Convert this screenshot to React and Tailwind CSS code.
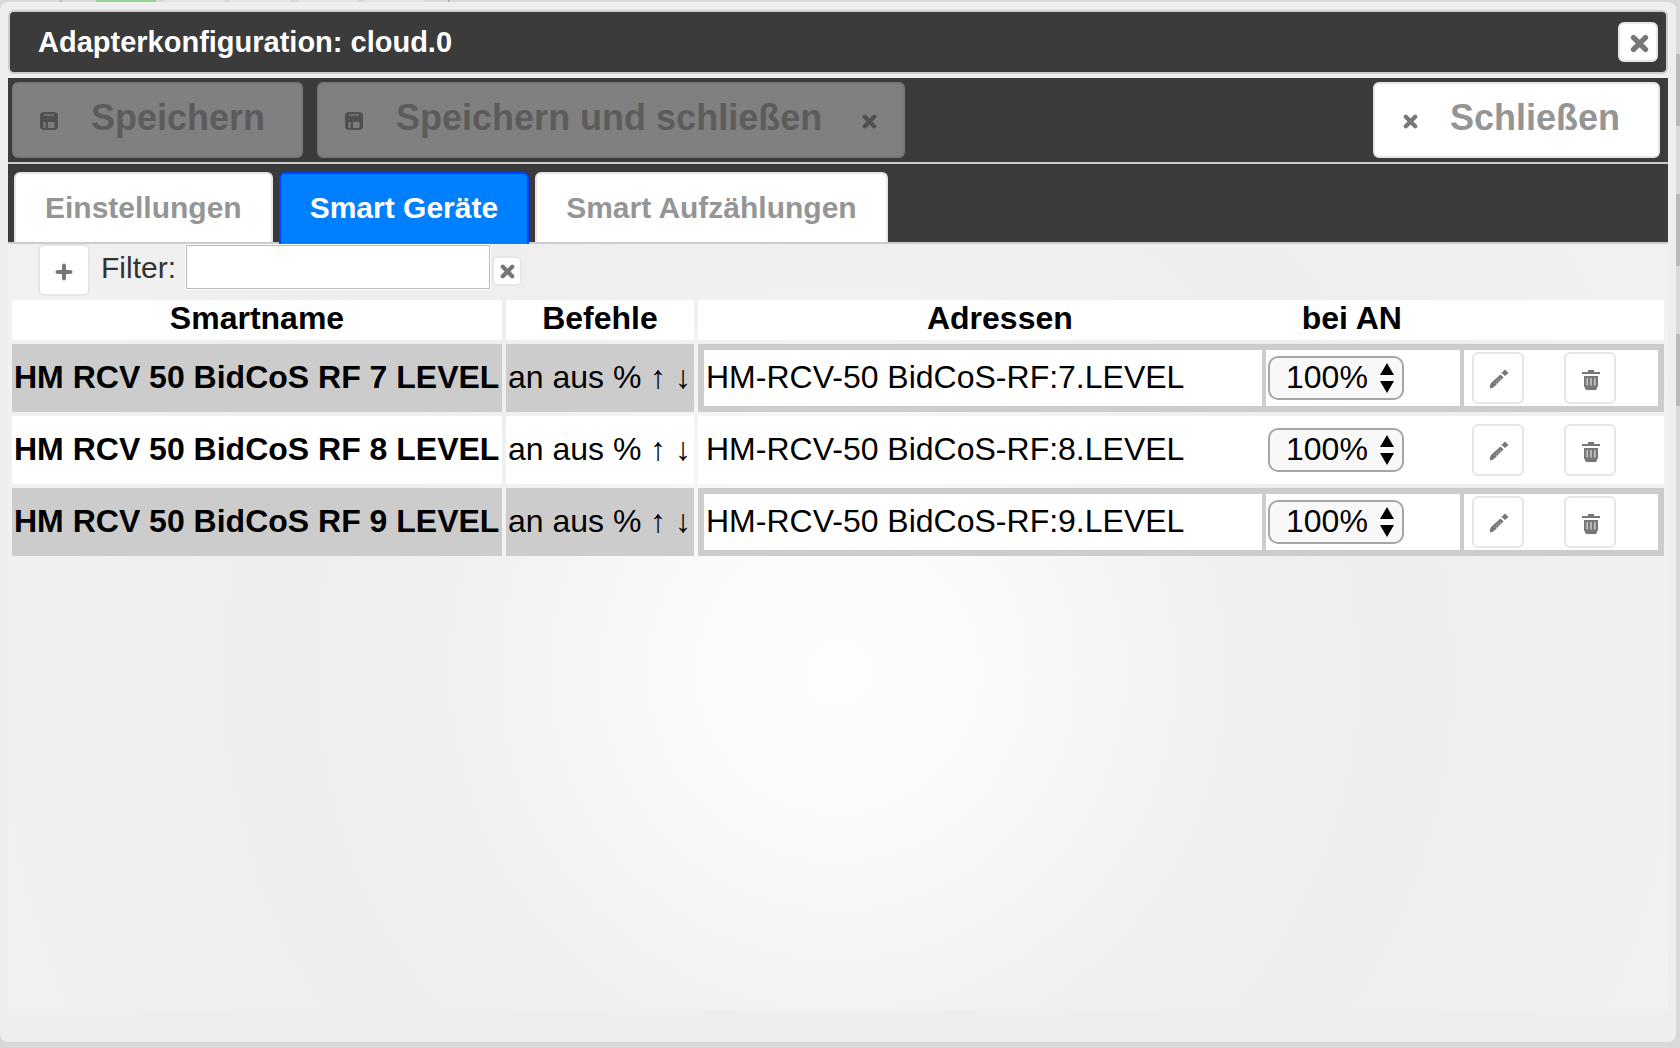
import { useState } from 'react'

const devices = [
  { name: 'HM RCV 50 BidCoS RF 7 LEVEL', address: 'HM-RCV-50 BidCoS-RF:7.LEVEL' },
  { name: 'HM RCV 50 BidCoS RF 8 LEVEL', address: 'HM-RCV-50 BidCoS-RF:8.LEVEL' },
  { name: 'HM RCV 50 BidCoS RF 9 LEVEL', address: 'HM-RCV-50 BidCoS-RF:9.LEVEL' },
]

const tabs = ['Einstellungen', 'Smart Geräte', 'Smart Aufzählungen']

export default function App() {
  const [tab, setTab] = useState(1)
  const [filter, setFilter] = useState('')

  return (
    <div className="relative flex min-h-screen flex-col bg-[#d9d9d9] pt-0.5 pr-1 pb-1.5 font-['Liberation_Sans',Arial,sans-serif]">
      <PageBehind />
      <div className="relative flex flex-1 flex-col rounded-lg bg-[#eee] px-2 pt-2 pb-8">
        <header className="flex h-16 items-center justify-between rounded-md border-2 border-[#ccc] bg-[#3b3b3b] pr-2 pl-7">
          <h1 className="text-[29px] leading-9 font-bold text-white">Adapterkonfiguration: cloud.0</h1>
          <IconButton label="Dialog schließen" className="size-10 pt-0.5 pl-0.5">
            <CloseIcon className="size-[19px]" />
          </IconButton>
        </header>

        <div className="mt-1 flex h-[86px] items-start border-b-2 border-[#ccc] bg-[#3b3b3b] px-1 pt-1">
          <button type="button" disabled className="flex h-[76px] items-center rounded-md border-2 border-[#777] bg-[#808080] pt-0.5 pr-9 pl-[25px] text-4xl font-bold text-[#5c5c5c]">
            <SaveIcon />
            <span className="pb-1.5 pl-8">Speichern</span>
          </button>
          <button type="button" disabled className="ml-3.5 flex h-[76px] items-center rounded-md border-2 border-[#777] bg-[#808080] pt-0.5 pr-[26px] pl-[25px] text-4xl font-bold text-[#5c5c5c]">
            <SaveIcon />
            <span className="pr-10 pb-1.5 pl-8">Speichern und schließen</span>
            <CloseIcon className="size-[15px] text-[#505050]" />
          </button>
          <button type="button" className="mr-1 ml-auto flex h-[76px] items-center rounded-md border-2 border-[#e6e6e6] bg-white pt-0.5 pr-[38px] pl-7 text-4xl font-bold text-[#959595]">
            <CloseIcon className="size-[15px] text-[#777]" />
            <span className="pb-1.5 pl-8">Schließen</span>
          </button>
        </div>

        <div role="tablist" className="flex h-20 items-end gap-1.5 border-b-2 border-[#ccc] bg-[#3b3b3b] pl-1.5">
          {tabs.map((t, i) => (
            <button
              key={t}
              type="button"
              role="tab"
              aria-selected={i === tab}
              onClick={() => setTab(i)}
              className={`rounded-t-md border-2 border-b-0 px-[29px] text-[30px] leading-9 font-bold ${
                i === tab
                  ? '-mb-0.5 h-[72px] border-[#0040ff] bg-[#007fff] pb-0.5 text-white'
                  : 'h-[70px] border-[#e6e6e6] bg-white text-[#959595]'
              }`}
            >
              {t}
            </button>
          ))}
        </div>

        <main className="flex-1 bg-[radial-gradient(circle_at_50%_428px,#fdfdfd_0px,#fbfbfb_130px,#f6f6f6_250px,#f0f0f0_400px,#eee_560px,#f1f1f1_900px)]">
          <div className="flex h-[52px] items-start pl-[30px]">
            <IconButton label="Gerät hinzufügen" className="size-[52px] pt-1">
              <PlusIcon />
            </IconButton>
            <label htmlFor="filter" className="mt-1.5 mr-2.5 ml-[11px] text-[30px] leading-9 text-[#333]">Filter:</label>
            <input
              id="filter"
              value={filter}
              onChange={(e) => setFilter(e.target.value)}
              className="mt-px h-11 w-[304px] border border-[#bbb] bg-white px-2 text-[30px] outline-1 outline-white"
            />
            <IconButton label="Filter löschen" className="mt-3 ml-0.5 size-[30px]" onClick={() => setFilter('')}>
              <CloseIcon className="size-[15px]" />
            </IconButton>
          </div>

          <table className="w-full border-separate border-spacing-1 text-[32px] leading-9 text-black">
            <thead>
              <tr className="h-10 bg-white">
                <th className="w-[490px] p-0 pb-1">Smartname</th>
                <th className="w-[188px] p-0 pb-1">Befehle</th>
                <th className="p-0 pb-1">
                  <div className="flex">
                    <span className="w-5/8">Adressen</span>
                    <span>bei AN</span>
                  </div>
                </th>
              </tr>
            </thead>
            <tbody>
              {devices
                .filter((d) => d.name.toLowerCase().includes(filter.toLowerCase()))
                .map((d) => (
                  <DeviceRow key={d.name} device={d} />
                ))}
            </tbody>
          </table>
        </main>
      </div>
    </div>
  )
}

function DeviceRow({ device }) {
  return (
    <tr className="h-[68px] bg-white odd:bg-[#ccc]">
      <td className="p-0.5 pb-1 font-bold whitespace-nowrap">{device.name}</td>
      <td className="p-0.5 pb-1 whitespace-nowrap">an aus % ↑ ↓</td>
      <td className="p-0.5">
        <table className="w-full border-separate border-spacing-1">
          <tbody>
            <tr className="h-14 bg-white">
              <td className="p-0.5 pb-1">{device.address}</td>
              <td className="w-[194px] p-0.5">
                <LevelSelect name={device.name} />
              </td>
              <td className="w-[194px] p-0">
                <div className="flex gap-10 pl-2">
                  <IconButton label={`${device.name} bearbeiten`} className="size-[52px] pt-0.5 pl-0.5">
                    <PencilIcon />
                  </IconButton>
                  <IconButton label={`${device.name} löschen`} className="size-[52px] pt-1 pl-0.5">
                    <TrashIcon />
                  </IconButton>
                </div>
              </td>
            </tr>
          </tbody>
        </table>
      </td>
    </tr>
  )
}

function LevelSelect({ name }) {
  return (
    <div className="relative w-[136px]">
      <select
        aria-label={`${name} bei AN`}
        defaultValue="100%"
        className="block h-11 w-full appearance-none rounded-[10px] border-2 border-[#a6a6a6] bg-[#f8f8f8] pb-0.5 pl-4 leading-9"
      >
        <option>100%</option>
        <option>75%</option>
        <option>50%</option>
        <option>25%</option>
      </select>
      <svg viewBox="0 0 14 30" className="pointer-events-none absolute top-[7px] right-2.5 h-[30px] w-3.5" fill="#000">
        <path d="M7 0 14 12H0zM7 30 0 18h14z" />
      </svg>
    </div>
  )
}

function IconButton({ label, className, onClick, children }) {
  return (
    <button
      type="button"
      aria-label={label}
      onClick={onClick}
      className={`flex shrink-0 items-center justify-center rounded-md border-2 border-[#e6e6e6] bg-white text-[#777] ${className}`}
    >
      {children}
    </button>
  )
}

// slivers of the page that stick out around the dialog
function PageBehind() {
  return (
    <div aria-hidden="true">
      <div className="absolute inset-x-0 top-0 flex h-2">
        <span className="ml-[60px] w-0.5 bg-[#bbb]" />
        <span className="ml-[34px] w-[60px] bg-[#93d693]" />
        <span className="ml-2 w-[60px] bg-[#e4e4e4]" />
        <span className="ml-1.5 w-[60px] bg-[#e4e4e4]" />
        <span className="ml-2 w-[60px] bg-[#e4e4e4]" />
        <span className="ml-1.5 w-[60px] bg-[#e4e4e4]" />
        <span className="ml-6 w-0.5 bg-[#bbb]" />
      </div>
      <div className="absolute top-[54px] right-0 flex w-2 flex-col gap-[68px]">
        <span className="h-[72px] bg-[#bababa]" />
        <span className="h-[72px] bg-[#bababa]" />
        <span className="h-[72px] bg-[#bababa]" />
      </div>
    </div>
  )
}

function CloseIcon({ className }) {
  return (
    <svg viewBox="0 0 16 16" className={className} fill="none" stroke="currentColor" strokeWidth="4.600" strokeLinecap="round">
      <path d="M3 3l10 10M13 3L3 13" />
    </svg>
  )
}

function PlusIcon() {
  return (
    <svg viewBox="0 0 18 18" className="size-[18px]" fill="none" stroke="currentColor" strokeWidth="4" strokeLinecap="round">
      <path d="M9 2.500v13M2.500 9h13" />
    </svg>
  )
}

function SaveIcon() {
  return (
    <svg viewBox="0 0 20 20" className="size-5" fill="none">
      <rect x="1" y="1" width="18" height="18" rx="4" fill="#505050" />
      <path d="M5 4h10" stroke="#777" strokeWidth="1.500" />
      <path d="M4.500 11h2v6h-2zM9 11h6.500v6H9z" fill="#7c7c7c" />
    </svg>
  )
}

function PencilIcon() {
  return (
    <svg viewBox="0 0 20 20" className="size-5" fill="currentColor">
      <path d="M1 19.500V16l2-3 8.500-7.500 3 3L6 17l-2.500 2z" />
      <path d="M16 .5 19.500 4 16 7 12.500 4z" />
      <path d="M5 14.500l7-6.500M7 15l6-6" stroke="#bbb" strokeWidth="1" strokeDasharray="1.500 1.500" />
    </svg>
  )
}

function TrashIcon() {
  return (
    <svg viewBox="0 0 18 20" className="h-5 w-[18px]" fill="currentColor">
      <path d="M6 0h6v2h6v2H0V2h6zM2 6h14v10l-2 4H4l-2-4z" />
      <path d="M5.200 8v7.500M9 8v7.500M12.800 8v7.500" stroke="#ccc" strokeWidth="1.500" />
    </svg>
  )
}
